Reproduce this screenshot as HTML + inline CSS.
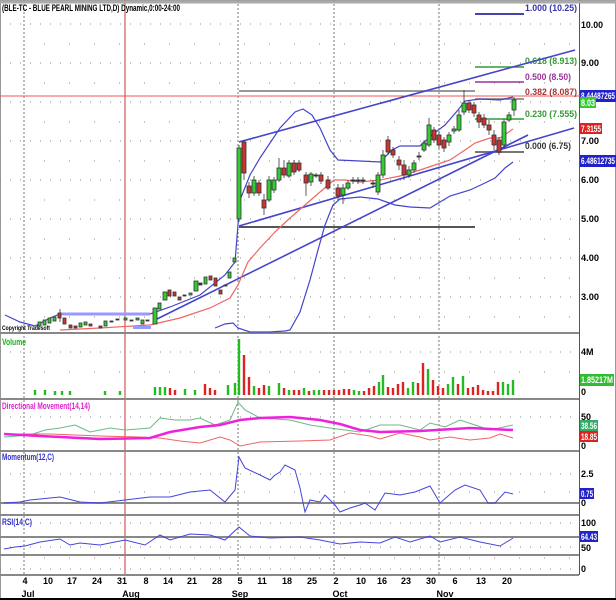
<!DOCTYPE html>
<html><head><meta charset="utf-8"><style>
html,body{margin:0;padding:0;background:#fff}
svg{display:block}
text{font-family:"Liberation Sans",sans-serif;font-weight:bold}
</style></head><body>
<svg width="616" height="600" viewBox="0 0 616 600" xmlns="http://www.w3.org/2000/svg">
<rect width="616" height="600" fill="#fff"/>
<rect x="0.5" y="0.5" width="615" height="599" fill="none" stroke="#999"/>
<g stroke="#888" stroke-width="1" stroke-dasharray="1,9">
<line x1="0" y1="24" x2="579" y2="24"/><line x1="0" y1="63" x2="579" y2="63"/><line x1="0" y1="102" x2="579" y2="102"/><line x1="0" y1="141" x2="579" y2="141"/><line x1="0" y1="180" x2="579" y2="180"/><line x1="0" y1="219" x2="579" y2="219"/><line x1="0" y1="258" x2="579" y2="258"/><line x1="0" y1="297" x2="579" y2="297"/>
<line x1="0" y1="352" x2="579" y2="352"/><line x1="0" y1="417" x2="579" y2="417"/><line x1="0" y1="474" x2="579" y2="474"/><line x1="0" y1="523" x2="579" y2="523"/><line x1="0" y1="547" x2="579" y2="547"/><line x1="0" y1="569" x2="579" y2="569"/>
</g>
<g stroke="#888" stroke-dasharray="1,24">
<line x1="44" y1="44" x2="579" y2="44"/><line x1="44" y1="83" x2="579" y2="83"/><line x1="44" y1="122" x2="579" y2="122"/><line x1="44" y1="161" x2="579" y2="161"/><line x1="44" y1="200" x2="579" y2="200"/><line x1="44" y1="239" x2="579" y2="239"/><line x1="44" y1="278" x2="579" y2="278"/><line x1="44" y1="317" x2="579" y2="317"/>
<line x1="44" y1="372" x2="579" y2="372"/><line x1="44" y1="492" x2="579" y2="492"/><line x1="44" y1="558" x2="579" y2="558"/>
</g>
<g stroke="#777" stroke-dasharray="2,2">
<line x1="24" y1="0" x2="24" y2="575"/><line x1="238" y1="0" x2="238" y2="575"/><line x1="334" y1="0" x2="334" y2="575"/><line x1="439" y1="0" x2="439" y2="575"/>
</g>
<line x1="125" y1="0" x2="125" y2="575" stroke="#c33"/>
<g stroke="#888" stroke-width="2">
<line x1="0" y1="333" x2="579" y2="333"/><line x1="0" y1="399" x2="579" y2="399"/><line x1="0" y1="451" x2="579" y2="451"/><line x1="0" y1="515" x2="579" y2="515"/><line x1="0" y1="575" x2="579" y2="575"/>
<line x1="0" y1="503" x2="579" y2="503"/><line x1="0" y1="537" x2="579" y2="537"/><line x1="0" y1="555" x2="579" y2="555"/>
</g>
<line x1="579.5" y1="0" x2="579.5" y2="575" stroke="#555"/>
<line x1="0" y1="2" x2="616" y2="2" stroke="#aaa" stroke-width="3"/>
<line x1="0" y1="96" x2="616" y2="96" stroke="#e55"/>
<line x1="475" y1="14" x2="524" y2="14" stroke="#44a" stroke-width="2"/>
<line x1="475" y1="67" x2="524" y2="67" stroke="#393" stroke-width="1.5"/>
<line x1="475" y1="82" x2="524" y2="82" stroke="#939" stroke-width="1.5"/>
<line x1="239" y1="91" x2="475" y2="91" stroke="#777" stroke-width="1.5"/>
<line x1="475" y1="99" x2="524" y2="99" stroke="#777" stroke-width="1.5"/>
<line x1="475" y1="119" x2="524" y2="119" stroke="#393" stroke-width="1.5"/>
<line x1="475" y1="152" x2="524" y2="152" stroke="#777" stroke-width="2"/>
<line x1="239" y1="227" x2="475" y2="227" stroke="#555" stroke-width="2"/>
<g font-size="9">
<text x="525" y="11" fill="#33a" textLength="52" lengthAdjust="spacingAndGlyphs">1.000 (10.25)</text>
<text x="525" y="64" fill="#393" textLength="52" lengthAdjust="spacingAndGlyphs">0.618 (8.913)</text>
<text x="525" y="80" fill="#939" textLength="46" lengthAdjust="spacingAndGlyphs">0.500 (8.50)</text>
<text x="525" y="95" fill="#a33" textLength="52" lengthAdjust="spacingAndGlyphs">0.382 (8.087)</text>
<text x="525" y="117" fill="#393" textLength="52" lengthAdjust="spacingAndGlyphs">0.230 (7.555)</text>
<text x="525" y="149" fill="#333" textLength="46" lengthAdjust="spacingAndGlyphs">0.000 (6.75)</text>
</g>
<g stroke="#44c" stroke-width="1.6" fill="none">
<line x1="239" y1="142" x2="575" y2="50"/>
<line x1="239" y1="226" x2="574" y2="128"/>
<line x1="155" y1="320" x2="528" y2="135"/>
</g>
<polyline fill="none" stroke="#44c" stroke-width="1.2" points="5,315 20,322 35,326 50,318 60,314 150,314 170,307 200,295 225,275 235,262 240,200 250,175 260,158 280,128 295,112 303,109 312,115 320,128 330,150 338,160 360,161 380,162 392,150 400,146 420,146 432,135 445,125 458,110 465,101 480,99 500,100 513,97"/>
<polyline fill="none" stroke="#44c" stroke-width="1.2" points="215,328 225,324 233,323 238,328 250,332 270,332 285,331 290,330 300,312 310,280 318,250 325,225 333,205 340,199 360,197 378,199 395,205 410,207 430,208 440,202 450,196 470,190 485,183 495,178 505,168 513,162"/>
<polyline fill="none" stroke="#e66" stroke-width="1.2" points="60,330 100,328 150,325 180,318 210,308 230,298 238,285 248,262 260,248 275,232 290,218 305,205 320,192 334,180 345,180 360,182 380,180 400,176 420,170 435,165 450,160 465,150 475,143 490,138 500,138 513,129"/>
<polyline fill="none" stroke="#99f" stroke-width="3" points="60,314 150,314"/>
<rect x="133" y="326" width="18" height="3" fill="#99f"/>
<g stroke="#333" stroke-width="0.8">
<line x1="239" y1="145" x2="239" y2="222"/><rect x="237" y="148" width="4" height="71" fill="#3c3"/>
<line x1="244" y1="140" x2="244" y2="180"/><rect x="242" y="142" width="4" height="31" fill="#c33"/>
<line x1="249" y1="182" x2="249" y2="198"/><rect x="247" y="186" width="4" height="7" fill="#c33"/>
<line x1="254" y1="176" x2="254" y2="196"/><rect x="252" y="180" width="4" height="13" fill="#3c3"/>
<line x1="259" y1="180" x2="259" y2="196"/><rect x="257" y="183" width="4" height="10" fill="#c33"/>
<line x1="264" y1="194" x2="264" y2="215"/><rect x="262" y="200" width="4" height="8" fill="#c33"/>
<line x1="269" y1="176" x2="269" y2="202"/><rect x="267" y="180" width="4" height="20" fill="#3c3"/>
<line x1="274" y1="177" x2="274" y2="193"/><rect x="272" y="180" width="4" height="10" fill="#3c3"/>
<line x1="279" y1="158" x2="279" y2="182"/><rect x="277" y="168" width="4" height="12" fill="#3c3"/>
<line x1="284" y1="160" x2="284" y2="178"/><rect x="282" y="168" width="4" height="7" fill="#c33"/>
<line x1="289" y1="160" x2="289" y2="178"/><rect x="287" y="163" width="4" height="13" fill="#3c3"/>
<line x1="294" y1="160" x2="294" y2="175"/><rect x="292" y="163" width="4" height="9" fill="#c33"/>
<line x1="299" y1="160" x2="299" y2="172"/><rect x="297" y="163" width="4" height="7" fill="#c33"/>
<line x1="306" y1="172" x2="306" y2="196"/><rect x="304" y="175" width="4" height="8" fill="#c33"/>
<line x1="311" y1="172" x2="311" y2="186"/><rect x="309" y="174" width="4" height="8" fill="#3c3"/>
<line x1="316" y1="173" x2="316" y2="178"/><rect x="314" y="175" width="4" height="1" fill="#333"/>
<line x1="321" y1="172" x2="321" y2="184"/><rect x="319" y="175" width="4" height="6" fill="#c33"/>
<line x1="328" y1="176" x2="328" y2="190"/><rect x="326" y="180" width="4" height="8" fill="#c33"/>
<line x1="338" y1="184" x2="338" y2="200"/><rect x="336" y="188" width="4" height="8" fill="#c33"/>
<line x1="343" y1="184" x2="343" y2="204"/><rect x="341" y="188" width="4" height="7" fill="#3c3"/>
<line x1="348" y1="180" x2="348" y2="190"/><rect x="346" y="183" width="4" height="5" fill="#3c3"/>
<line x1="353" y1="177" x2="353" y2="184"/><rect x="351" y="180" width="4" height="1" fill="#333"/>
<line x1="358" y1="177" x2="358" y2="184"/><rect x="356" y="180" width="4" height="1" fill="#333"/>
<line x1="363" y1="177" x2="363" y2="184"/><rect x="361" y="180" width="4" height="1" fill="#333"/>
<line x1="373" y1="180" x2="373" y2="188"/><rect x="371" y="183" width="4" height="1" fill="#333"/>
<line x1="378" y1="172" x2="378" y2="195"/><rect x="376" y="175" width="4" height="17" fill="#3c3"/>
<line x1="383" y1="150" x2="383" y2="178"/><rect x="381" y="155" width="4" height="20" fill="#3c3"/>
<line x1="388" y1="136" x2="388" y2="155"/><rect x="386" y="140" width="4" height="12" fill="#c33"/>
<line x1="393" y1="147" x2="393" y2="158"/><rect x="391" y="150" width="4" height="5" fill="#c33"/>
<line x1="399" y1="156" x2="399" y2="170"/><rect x="397" y="160" width="4" height="5" fill="#c33"/>
<line x1="404" y1="160" x2="404" y2="180"/><rect x="402" y="165" width="4" height="10" fill="#c33"/>
<line x1="409" y1="166" x2="409" y2="178"/><rect x="407" y="170" width="4" height="5" fill="#3c3"/>
<line x1="414" y1="160" x2="414" y2="173"/><rect x="412" y="163" width="4" height="7" fill="#3c3"/>
<line x1="419" y1="152" x2="419" y2="160"/><rect x="417" y="156" width="4" height="1" fill="#333"/>
<line x1="424" y1="140" x2="424" y2="152"/><rect x="422" y="143" width="4" height="7" fill="#3c3"/>
<line x1="429" y1="118" x2="429" y2="147"/><rect x="427" y="125" width="4" height="20" fill="#3c3"/>
<line x1="434" y1="127" x2="434" y2="143"/><rect x="432" y="130" width="4" height="10" fill="#c33"/>
<line x1="439" y1="131" x2="439" y2="148"/><rect x="437" y="135" width="4" height="10" fill="#c33"/>
<line x1="444" y1="137" x2="444" y2="152"/><rect x="442" y="140" width="4" height="8" fill="#c33"/>
<line x1="449" y1="132" x2="449" y2="146"/><rect x="447" y="135" width="4" height="7" fill="#3c3"/>
<line x1="454" y1="126" x2="454" y2="134"/><rect x="452" y="129" width="4" height="2" fill="#3c3"/>
<line x1="459" y1="110" x2="459" y2="132"/><rect x="457" y="115" width="4" height="15" fill="#3c3"/>
<line x1="464" y1="90" x2="464" y2="115"/><rect x="462" y="103" width="4" height="9" fill="#3c3"/>
<line x1="469" y1="100" x2="469" y2="113"/><rect x="467" y="103" width="4" height="7" fill="#c33"/>
<line x1="474" y1="102" x2="474" y2="117"/><rect x="472" y="105" width="4" height="8" fill="#c33"/>
<line x1="479" y1="112" x2="479" y2="128"/><rect x="477" y="115" width="4" height="7" fill="#c33"/>
<line x1="484" y1="114" x2="484" y2="128"/><rect x="482" y="118" width="4" height="7" fill="#c33"/>
<line x1="489" y1="120" x2="489" y2="135"/><rect x="487" y="125" width="4" height="5" fill="#c33"/>
<line x1="494" y1="130" x2="494" y2="150"/><rect x="492" y="135" width="4" height="10" fill="#c33"/>
<line x1="499" y1="137" x2="499" y2="155"/><rect x="497" y="140" width="4" height="12" fill="#c33"/>
<line x1="504" y1="119" x2="504" y2="148"/><rect x="502" y="122" width="4" height="23" fill="#3c3"/>
<line x1="509" y1="112" x2="509" y2="122"/><rect x="507" y="115" width="4" height="5" fill="#3c3"/>
<line x1="514" y1="97" x2="514" y2="116"/><rect x="512" y="100" width="4" height="10" fill="#3c3"/>
<rect x="38" y="322" width="3" height="4" fill="#3c3"/><rect x="43" y="320" width="3" height="5" fill="#3c3"/><rect x="48" y="318" width="3" height="5" fill="#3c3"/><rect x="53" y="317" width="3" height="4" fill="#3c3"/>
<line x1="60" y1="309" x2="60" y2="322"/><rect x="58" y="313" width="3" height="5" fill="#c33"/><rect x="63" y="318" width="3" height="6" fill="#c33"/>
<rect x="69" y="325" width="3" height="3" fill="#c33"/><rect x="74" y="326" width="3" height="2" fill="#c33"/><rect x="79" y="323" width="3" height="4" fill="#3c3"/><rect x="84" y="322" width="3" height="3" fill="#3c3"/><rect x="89" y="324" width="3" height="2" fill="#c33"/><rect x="99" y="326" width="3" height="2" fill="#c33"/><rect x="104" y="321" width="3" height="5" fill="#3c3"/>
<rect x="110" y="321" width="3" height="1" fill="#333"/><rect x="116" y="319" width="3" height="1" fill="#333"/><rect x="124" y="318" width="3" height="2" fill="#3c3"/><rect x="130" y="320" width="3" height="1" fill="#333"/><rect x="136" y="318" width="3" height="2" fill="#3c3"/><rect x="141" y="320" width="3" height="4" fill="#3c3"/><rect x="146" y="320" width="3" height="1" fill="#333"/>
<rect x="153" y="308" width="4" height="16" fill="#3c3"/><rect x="158" y="303" width="3" height="6" fill="#3c3"/><rect x="163" y="292" width="4" height="8" fill="#3c3"/><rect x="168" y="290" width="3" height="6" fill="#c33"/><rect x="173" y="292" width="3" height="4" fill="#c33"/><rect x="178" y="297" width="3" height="3" fill="#c33"/><rect x="183" y="295" width="3" height="1" fill="#333"/><rect x="189" y="293" width="3" height="2" fill="#3c3"/><rect x="194" y="281" width="4" height="10" fill="#3c3"/><rect x="199" y="283" width="3" height="2" fill="#333"/><rect x="204" y="277" width="3" height="7" fill="#3c3"/><rect x="209" y="276" width="3" height="4" fill="#c33"/><rect x="214" y="278" width="3" height="8" fill="#c33"/><rect x="219" y="290" width="3" height="4" fill="#c33"/><rect x="224" y="285" width="3" height="1" fill="#c33"/><rect x="228" y="272" width="3" height="6" fill="#3c3"/><rect x="233" y="258" width="3" height="4" fill="#3c3"/>
</g>
<g stroke-width="2.4">
<g stroke="#2b2">
<path d="M35 395V390M45 395V390M55 395V391M62 395V391M70 395V391M105 395V391M120 395V391M155 395V387M160 395V387M165 395V387M185 395V389M195 395V390M228 395V385M235 395V383M239 395V339M254 395V386M269 395V386M279 395V383M289 395V390M304 395V388M314 395V390M319 395V390M354 395V390M359 395V391M379 395V382M383 395V375M408 395V388M413 395V382M428 395V369M448 395V384M453 395V377M463 395V376M503 395V382M508 395V384M513 395V380"/>
</g>
<g stroke="#d22">
<path d="M170 395V388M175 395V390M205 395V384M210 395V388M215 395V390M244 395V355M249 395V377M259 395V388M264 395V385M284 395V388M294 395V390M299 395V390M309 395V391M324 395V390M329 395V390M334 395V390M339 395V390M344 395V389M349 395V389M364 395V391M369 395V388M374 395V386M388 395V387M393 395V388M398 395V384M403 395V382M418 395V383M423 395V363M433 395V380M438 395V386M443 395V388M458 395V384M468 395V388M473 395V387M478 395V385M483 395V390M488 395V391M493 395V391M498 395V382"/>
</g>
</g>
<polyline fill="none" stroke="#6b8" stroke-width="1" points="4,437 30,435 45,430 60,428 75,425 90,432 110,428 125,430 150,428 160,418 175,420 190,420 200,418 215,425 230,420 238,402 245,410 260,418 290,420 310,425 330,428 360,432 380,425 400,425 420,430 430,423 445,427 460,420 475,425 490,430 513,425"/>
<polyline fill="none" stroke="#e66" stroke-width="1" points="4,434 50,434 100,436 140,437 160,438 180,441 200,443 220,437 230,440 240,446 260,442 300,441 330,440 350,433 370,436 380,439 400,433 420,437 430,440 450,437 470,440 490,438 500,434 513,438"/>
<polyline fill="none" stroke="#e2d" stroke-width="2.5" points="4,434 40,436 100,439 150,438 170,432 200,427 220,425 240,420 260,418 290,417 320,420 340,424 360,430 380,432 420,431 470,428 513,430"/>
<polyline fill="none" stroke="#44d" stroke-width="1" points="4,503 20,502 30,500 60,497 80,502 100,503 125,500 150,497 170,497 190,492 210,490 225,502 235,490 239,457 245,468 260,475 270,480 275,475 280,472 285,465 295,470 300,488 305,512 310,500 320,502 325,495 335,505 340,512 350,508 360,505 365,503 375,510 385,493 400,495 415,492 430,486 440,503 455,490 465,485 480,490 488,503 495,503 505,492 513,494"/>
<polyline fill="none" stroke="#44d" stroke-width="1" points="4,549 15,547 25,546 40,542 60,539 70,545 80,543 100,545 125,540 145,545 160,535 170,540 190,534 210,535 225,540 239,527 250,536 270,538 300,537 320,540 340,544 360,542 380,543 395,537 410,542 430,536 440,542 460,537 480,542 500,546 510,540 513,538"/>
<text x="2" y="11" font-size="9" fill="#000" textLength="178" lengthAdjust="spacingAndGlyphs">(BLE-TC - BLUE PEARL MINING LTD,D) Dynamic,0:00-24:00</text>
<text x="2" y="330" font-size="6" fill="#000" textLength="48" lengthAdjust="spacingAndGlyphs">Copyright Tradesoft</text>
<text x="2" y="345" font-size="9" fill="#2a2" textLength="24" lengthAdjust="spacingAndGlyphs">Volume</text>
<text x="2" y="409" font-size="9" fill="#d2c" textLength="88" lengthAdjust="spacingAndGlyphs">Directional Movement(14,14)</text>
<text x="2" y="460" font-size="9" fill="#33c" textLength="52" lengthAdjust="spacingAndGlyphs">Momentum(12,C)</text>
<text x="2" y="525" font-size="9" fill="#33c" textLength="30" lengthAdjust="spacingAndGlyphs">RSI(14,C)</text>
<g font-size="9" fill="#000">
<text x="581" y="28" textLength="22" lengthAdjust="spacingAndGlyphs">10.00</text>
<text x="581" y="66" textLength="18" lengthAdjust="spacingAndGlyphs">9.00</text>
<text x="581" y="144" textLength="18" lengthAdjust="spacingAndGlyphs">7.00</text>
<text x="581" y="183" textLength="18" lengthAdjust="spacingAndGlyphs">6.00</text>
<text x="581" y="222" textLength="18" lengthAdjust="spacingAndGlyphs">5.00</text>
<text x="581" y="261" textLength="18" lengthAdjust="spacingAndGlyphs">4.00</text>
<text x="581" y="300" textLength="18" lengthAdjust="spacingAndGlyphs">3.00</text>
<text x="581" y="355">4M</text><text x="581" y="395">0</text>
<text x="581" y="420">50</text><text x="581" y="449">0</text>
<text x="581" y="477">2.5</text><text x="581" y="506">0</text>
<text x="581" y="526">100</text><text x="581" y="551">50</text><text x="581" y="572">0</text>
</g>
<rect x="580" y="90" width="36" height="12" fill="#22c"/><text x="581" y="99" font-size="9" fill="#fff" textLength="34" lengthAdjust="spacingAndGlyphs">8.44487265</text>
<rect x="580" y="97" width="16" height="11" fill="#3c3"/><text x="581" y="106" font-size="9" fill="#fff" textLength="14" lengthAdjust="spacingAndGlyphs">8.03</text>
<rect x="580" y="123" width="22" height="11" fill="#d22"/><text x="581" y="132" font-size="9" fill="#fff" textLength="20" lengthAdjust="spacingAndGlyphs">7.3155</text>
<rect x="580" y="155" width="36" height="12" fill="#22c"/><text x="581" y="164" font-size="9" fill="#fff" textLength="34" lengthAdjust="spacingAndGlyphs">6.48612735</text>
<rect x="580" y="374" width="34" height="12" fill="#3b3"/><text x="581" y="383" font-size="9" fill="#fff" textLength="32" lengthAdjust="spacingAndGlyphs">1.85217M</text>
<rect x="580" y="420" width="18" height="11" fill="#3a6"/><text x="581" y="429" font-size="9" fill="#fff" textLength="16" lengthAdjust="spacingAndGlyphs">38.56</text>
<rect x="580" y="431" width="18" height="11" fill="#d22"/><text x="581" y="440" font-size="9" fill="#fff" textLength="16" lengthAdjust="spacingAndGlyphs">18.85</text>
<rect x="580" y="488" width="14" height="11" fill="#22c"/><text x="581" y="497" font-size="9" fill="#fff" textLength="12" lengthAdjust="spacingAndGlyphs">0.75</text>
<rect x="580" y="531" width="18" height="11" fill="#22c"/><text x="581" y="540" font-size="9" fill="#fff" textLength="16" lengthAdjust="spacingAndGlyphs">64.43</text>
<g font-size="9" fill="#000" text-anchor="middle">
<text x="25" y="584">4</text><text x="48" y="584">10</text><text x="72" y="584">17</text><text x="97" y="584">24</text><text x="122" y="584">31</text><text x="146" y="584">8</text><text x="168" y="584">14</text><text x="192" y="584">21</text><text x="217" y="584">28</text><text x="240" y="584">5</text><text x="262" y="584">11</text><text x="287" y="584">18</text><text x="312" y="584">25</text><text x="336" y="584">2</text><text x="361" y="584">10</text><text x="382" y="584">16</text><text x="406" y="584">23</text><text x="431" y="584">30</text><text x="455" y="584">6</text><text x="481" y="584">13</text><text x="507" y="584">20</text>
<text x="28" y="597">Jul</text><text x="131" y="597">Aug</text><text x="240" y="597">Sep</text><text x="340" y="597">Oct</text><text x="445" y="597">Nov</text>
</g>
<line x1="0" y1="599" x2="616" y2="599" stroke="#000" stroke-width="2"/>
</svg>
</body></html>
